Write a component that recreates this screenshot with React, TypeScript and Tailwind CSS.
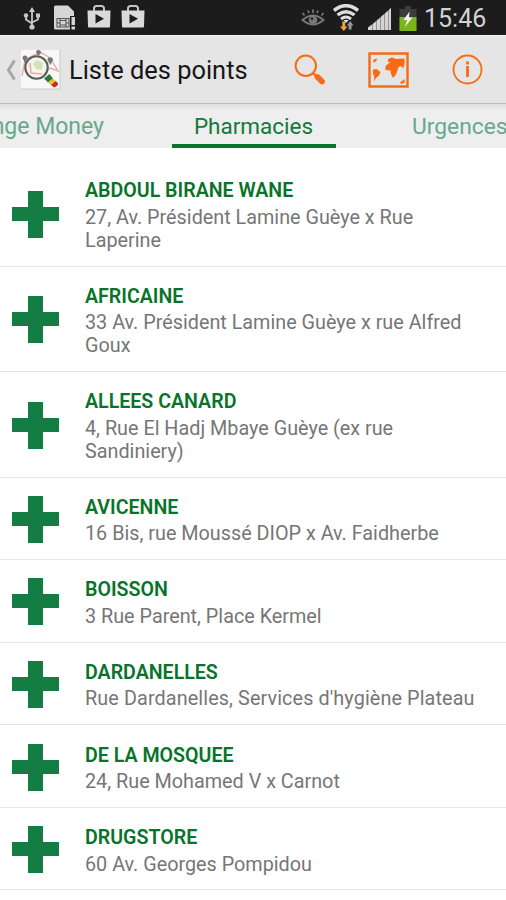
import type { ReactNode } from "react";

interface Place {
  name: string;
  address: string[];
  wide?: boolean;
}

const places: Place[] = [
  { name: "ABDOUL BIRANE WANE", address: ["27, Av. Président Lamine Guèye x Rue", "Laperine"] },
  { name: "AFRICAINE", address: ["33 Av. Président Lamine Guèye x rue Alfred", "Goux"] },
  { name: "ALLEES CANARD", address: ["4, Rue El Hadj Mbaye Guèye (ex rue", "Sandiniery)"] },
  { name: "AVICENNE", address: ["16 Bis, rue Moussé DIOP x Av. Faidherbe"] },
  { name: "BOISSON", address: ["3 Rue Parent, Place Kermel"] },
  { name: "DARDANELLES", address: ["Rue Dardanelles, Services d'hygiène Plateau"], wide: true },
  { name: "DE LA MOSQUEE", address: ["24, Rue Mohamed V x Carnot"] },
  { name: "DRUGSTORE", address: ["60 Av. Georges Pompidou"] },
];

function UsbIcon() {
  return (
    <svg className="mt-px ml-[23px] h-[23px] w-[18px] shrink-0" viewBox="0 0 18 23" fill="none" stroke="#c9c9c9" strokeWidth="1.8">
      <path d="M9 4v16M3 8v4.5l6 4M15 9v3.5l-6 3" />
      <path d="M9 0l3 5H6z" fill="#c9c9c9" stroke="none" />
      <circle cx="9" cy="20" r="2.6" fill="#c9c9c9" stroke="none" />
      <circle cx="3" cy="8.5" r="2.2" fill="#c9c9c9" stroke="none" />
      <path d="M13 6.5h4v4h-4z" fill="#c9c9c9" stroke="none" />
    </svg>
  );
}

function SimIcon() {
  return (
    <svg className="mt-px ml-[13px] h-[26px] w-[22px] shrink-0" viewBox="0 0 22 26">
      <path d="M0 2Q0 .5 1.5 .5H14l6 6V11h-4v13.5H1.5Q0 24.500 0 23z" fill="#d6d6d6" />
      <path d="M3 13.5h12V22H3zM6 13.5V22M12 13.5V22M3 18h3M12 18h3M6 15.5h6M6 20h6" fill="none" stroke="#555" strokeWidth="1.1" />
      <path d="M17.5 12H21v8h-3.5zM17.5 21.5H21v3h-3.5z" fill="#d6d6d6" />
    </svg>
  );
}

function PlayBagIcon({ className }: { className: string }) {
  return (
    <svg className={`-mt-[3px] h-[24px] w-[24px] shrink-0 ${className}`} viewBox="0 0 24 24">
      <path d="M7 7V4.5Q7 2 9.500 2h5Q17 2 17 4.500V7" fill="none" stroke="#c4c4c4" strokeWidth="2" />
      <path d="M.5 6.5h23l-.5 16q-.1 1-1 1H2q-.9 0-1-1z" fill="#dadada" />
      <path d="M8.500 10v9.500l8.500-4.700z" fill="#1c1c1c" />
    </svg>
  );
}

function EyeIcon() {
  return (
    <svg className="h-[20px] w-[24px] shrink-0" viewBox="0 0 24 20" fill="none" stroke="#777" strokeWidth="2">
      <path d="M1.5 12Q12 3 22.5 12 12 21 1.5 12z" />
      <circle cx="12" cy="12" r="4.3" fill="#777" stroke="none" />
      <circle cx="11" cy="10.8" r="1.3" fill="#1c1c1c" stroke="none" />
      <path d="M3.5 7.5L1.5 5M8 5L7 2.5M12 5V1.5M16 5l1-2.5M20.5 7.5l2-2.5" strokeWidth="1.8" />
    </svg>
  );
}

function WifiIcon() {
  return (
    <svg className="ml-[8px] h-[27px] w-[26px] shrink-0" viewBox="0 0 26 27" fill="none" stroke="#dedede">
      <path d="M1 6.5q12-9.500 24 0" strokeWidth="3.6" />
      <path d="M4.500 11q8.500-6.500 17 0" strokeWidth="3.4" />
      <path d="M8 15q5-4 10 0" strokeWidth="3" />
      <path d="M10.500 16.500q2.500-1.500 5 0L13 19z" fill="#dedede" stroke="none" />
      <path d="M9.300 17.500v5H7l3.800 4.500 3.700-4.500h-2.300v-5z" fill="#f0a33a" stroke="none" />
      <path d="M15.700 25.500V21.500h-1.700l3.200-4.500 3.200 4.500h-1.900v4z" fill="#999" stroke="none" />
    </svg>
  );
}

function SignalIcon() {
  return (
    <svg className="mt-[2px] ml-[9px] h-[24px] w-[24px] shrink-0" viewBox="0 0 24 24" fill="#d4d4d4">
      <path d="M0 20.5l4-3V23H0zM5 17l3-2.500V23H5zM9 13.500l3-2.500v12H9zM13 10l3-2.500V23h-3zM17 6.500L20 4v19h-3zM21 3l2-2v22h-2z" />
      <path d="M0 21L23 1v22H0z" opacity=".65" />
    </svg>
  );
}

function BatteryIcon() {
  return (
    <svg className="mt-px ml-[7px] h-[25px] w-[18px] shrink-0" viewBox="0 0 18 25">
      <path d="M6 0h6v3h5.500v22H.5V3H6z" fill="#3c3c3c" />
      <path d="M.5 11h17v14H.5z" fill="#79b51c" />
      <path d="M10.500 5.500L4.500 14H8L6 21l7.500-9.500H10z" fill="#f2f2f2" />
    </svg>
  );
}

function StatusBar() {
  return (
    <div className="flex h-[35px] items-center bg-[#1c1c1c]">
      <UsbIcon />
      <SimIcon />
      <PlayBagIcon className="ml-[11px]" />
      <PlayBagIcon className="ml-[10px]" />
      <div className="ml-auto flex items-center pr-[20px]">
        <EyeIcon />
        <WifiIcon />
        <SignalIcon />
        <BatteryIcon />
        <span className="ml-[7px] w-[62px] pt-px text-[25px] leading-[35px] whitespace-nowrap text-[#d3d3d3]">15:46</span>
      </div>
    </div>
  );
}

function AppLogo() {
  return (
    <svg className="ml-[4px] h-[41px] w-[41px] shrink-0" viewBox="0 0 41 41" fill="none">
      <path d="M1 1h39v39H1z" fill="#f8f8f8" />
      <path d="M1 40h39V1" stroke="#c8c8c8" />
      <path d="M2 27l3-16 9-5 8-2 8 5 8 13-8-3-4 3" stroke="#f2aaa4" strokeWidth="1.4" />
      <path d="M2.5 9q0-2.500 2.500-2.500T7.500 9L5 14zM16 3.500Q16 1 18.500 1T21 3.500L18.500 7zM27.500 11q0-2.700 2.700-2.700T33 11l-2.700 5z" fill="#777" />
      <circle cx="16.5" cy="18.5" r="11.2" fill="#f4f4ea" fillOpacity=".8" stroke="#56605b" strokeWidth="2.1" />
      <path d="M13 15l4-4 6 3-1 7-6-1z" fill="#d3e4b2" />
      <path d="M10 14l1 10 11 1" stroke="#f0a8a2" strokeWidth="1.5" />
      <path d="M24 29.500l5.500-4.500 3.500 4.500-5 4z" fill="#287a3e" />
      <path d="M28 33.500l5-4 2.500 2.500-4.500 4z" fill="#e6c42b" />
      <path d="M31 36l4.500-4 2.500 2q.5 3-4 4.500z" fill="#c92e26" />
    </svg>
  );
}

function SearchIcon() {
  return (
    <svg className="h-[32px] w-[32px] shrink-0" viewBox="0 0 32 32" fill="none" stroke="#f86a14">
      <circle cx="11.800" cy="11.800" r="10.200" strokeWidth="2" />
      <path d="M19 19l3 3" strokeWidth="2.200" />
      <path d="M23.500 23l4.500 4.500" strokeWidth="5.800" strokeLinecap="round" />
    </svg>
  );
}

function MapIcon() {
  return (
    <svg className="ml-[42px] h-[36px] w-[41px] shrink-0" viewBox="0 0 41 36">
      <path d="M1.500 1.500h38v33h-38z" fill="none" stroke="#f86a14" strokeWidth="2.400" />
      <g fill="#f86a14">
        <path d="M5 8.500l2-1.500 2.500-.3L8 9l-2 2zM5 17.500l3.500-.5 4 3-1.500 3.500L8 26l-2 3 .3-4L5 21.500z" />
        <path d="M20 7l4-1.500 4 1.500 8.500-.5v6l-1.500 4-2-2.500-2.500 1L29 20l-1.500 3-2.500 3-2-4-.5-3.500-5-.5V14l3-2.500 2-1.500h-2.500z" />
        <path d="M31.500 31l5-4v3.500l-2.500 1.300z" />
      </g>
    </svg>
  );
}

function InfoIcon() {
  return (
    <svg className="ml-[43px] h-[31px] w-[31px] shrink-0" viewBox="0 0 31 31" fill="none" stroke="#f86a14">
      <circle cx="15.500" cy="15.500" r="14" strokeWidth="1.800" />
      <path d="M15.500 12v11" strokeWidth="2.800" />
      <path d="M15.500 7.500v3" strokeWidth="2.800" />
    </svg>
  );
}

function ActionBar() {
  return (
    <header className="flex h-[69px] items-center border-t border-b border-t-[#f4f4f4] border-b-[#bbb] bg-[#e5e5e5]">
      <svg className="ml-[6px] h-[22px] w-[10px] shrink-0" viewBox="0 0 10 22" fill="none" stroke="#a7a7a7" strokeWidth="3">
        <path d="M8.500 1.500l-6 9.500 6 9.500" />
      </svg>
      <AppLogo />
      <h1 className="ml-[8px] pt-[2px] text-[25.4px] whitespace-nowrap text-[#161616]">Liste des points</h1>
      <div className="ml-auto flex items-center pr-[23px]">
        <SearchIcon />
        <MapIcon />
        <InfoIcon />
      </div>
    </header>
  );
}

function Tab({ className, children }: { className: string; children: ReactNode }) {
  return <div className={`h-[44px] shrink-0 leading-[45px] whitespace-nowrap ${className}`}>{children}</div>;
}

function Tabs() {
  return (
    <nav className="flex h-[44px] overflow-hidden bg-gradient-to-b from-[#dedede] to-[#eeeeee] to-15%">
      <Tab className="flex w-[104px] justify-end text-[23px] text-[#69a88c]">Orange Money</Tab>
      <Tab className="ml-[68px] w-[164px] border-b-4 border-[#08752f] pr-px text-center text-[22.5px] leading-[44px] text-[#127a39]">Pharmacies</Tab>
      <Tab className="ml-[76px] text-[22.8px] text-[#69a88c]">Urgences</Tab>
    </nav>
  );
}

function PlaceRow({ place }: { place: Place }) {
  const tall = place.address.length > 1;
  return (
    <li className={`flex items-center border-b border-[#e6e6e6] ${tall ? "h-[105.5px]" : "h-[82.6px]"}`}>
      <svg className="mt-[2px] ml-[12px] h-[47px] w-[47px] shrink-0" viewBox="0 0 47 47" fill="#147d43">
        <path d="M16 0h15v16h16v14H31v17H16V30H0V16h16z" />
      </svg>
      <div className="ml-[26px] pt-[2.5px] whitespace-nowrap">
        <h2 className="mb-[1.5px] text-[19.6px] leading-[27px] font-semibold text-[#08732a]">{place.name}</h2>
        {place.address.map((line) => (
          <p key={line} className={`text-[19.8px] leading-[23px] text-[#767676] ${place.wide ? "tracking-[0.11px]" : ""}`}>{line}</p>
        ))}
      </div>
    </li>
  );
}

export default function App() {
  return (
    <div className="h-[900px] w-[506px] overflow-hidden bg-white font-[Roboto,sans-serif]">
      <StatusBar />
      <ActionBar />
      <Tabs />
      <ul className="pt-[13px]">
        {places.map((place) => (
          <PlaceRow key={place.name} place={place} />
        ))}
      </ul>
    </div>
  );
}
